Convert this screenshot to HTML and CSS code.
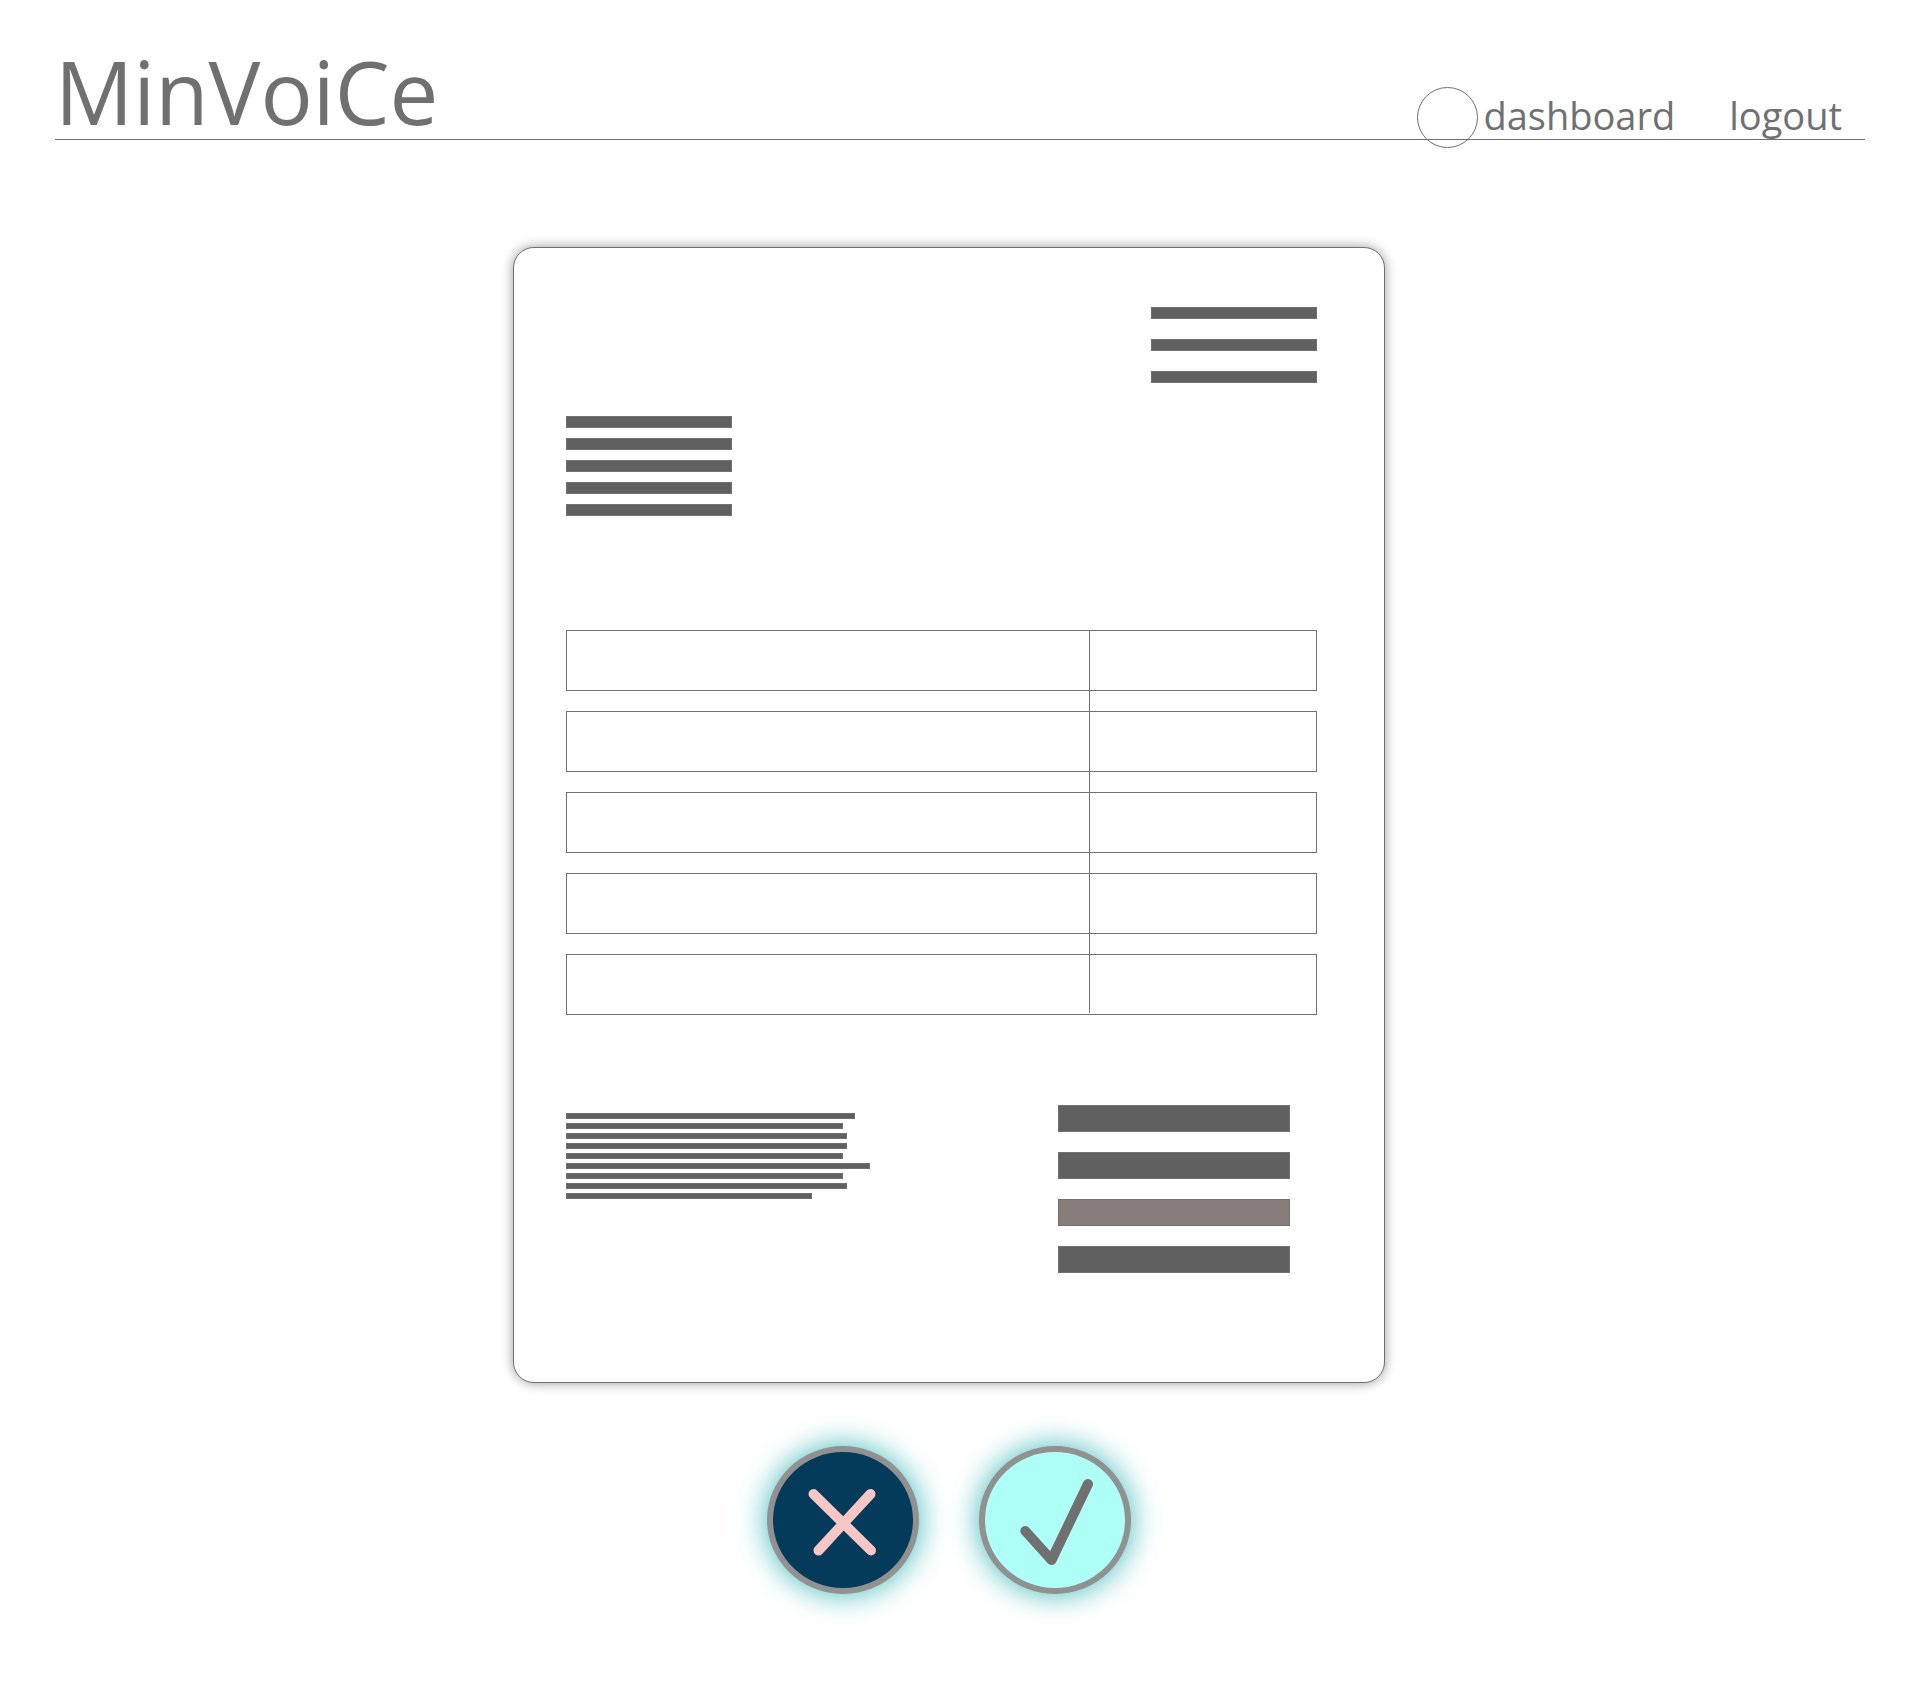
FILE: index.html
```html
<!DOCTYPE html>
<html lang="en">
<head>
  <meta charset="utf-8">
  <meta name="viewport" content="width=device-width, initial-scale=1">
  <title>MinVoiCe</title>
  <link rel="stylesheet" href="styles.css">
</head>
<body>
  <header class="site-header">
    <h1 class="brand">MinVoiCe</h1>
    <nav class="site-nav">
      <a class="nav-link nav-link-current" href="#dashboard">dashboard</a>
      <a class="nav-link" href="#logout">logout</a>
    </nav>
  </header>

  <main class="preview">
    <article class="invoice">
      <div class="sender">
        <div class="bar"></div>
        <div class="bar"></div>
        <div class="bar"></div>
      </div>
      <div class="recipient">
        <div class="bar"></div>
        <div class="bar"></div>
        <div class="bar"></div>
        <div class="bar"></div>
        <div class="bar"></div>
      </div>
      <div class="items">
        <table class="items-table">
          <tbody>
            <tr><td class="item-name"></td><td class="item-price"></td></tr>
            <tr><td class="item-name"></td><td class="item-price"></td></tr>
            <tr><td class="item-name"></td><td class="item-price"></td></tr>
            <tr><td class="item-name"></td><td class="item-price"></td></tr>
            <tr><td class="item-name"></td><td class="item-price"></td></tr>
          </tbody>
        </table>
      </div>
      <div class="summary">
        <div class="notes">
          <div class="bar" style="width: 289px"></div>
          <div class="bar" style="width: 277px"></div>
          <div class="bar" style="width: 281px"></div>
          <div class="bar" style="width: 281px"></div>
          <div class="bar" style="width: 277px"></div>
          <div class="bar" style="width: 304px"></div>
          <div class="bar" style="width: 277px"></div>
          <div class="bar" style="width: 281px"></div>
          <div class="bar" style="width: 246px"></div>
        </div>
        <div class="totals">
          <div class="bar"></div>
          <div class="bar"></div>
          <div class="bar bar-light"></div>
          <div class="bar"></div>
        </div>
      </div>
    </article>

    <div class="actions">
      <button class="action action-reject" type="button" aria-label="Reject">
        <svg class="action-icon" viewBox="6 6 140 136" aria-hidden="true">
          <path d="M46.5 48 104 104.5M103.5 48 51.5 104.5"/>
        </svg>
      </button>
      <button class="action action-accept" type="button" aria-label="Accept">
        <svg class="action-icon" viewBox="6 6 140 136" aria-hidden="true">
          <path d="M46.3 85 72.5 114 109 38"/>
        </svg>
      </button>
    </div>
  </main>
</body>
</html>
```

FILE: styles.css
```css
*,
*::before,
*::after {
  box-sizing: border-box;
}

body {
  margin: 0;
  background: #fff;
  color: #707070;
  font-family: "Open Sans", "Noto Sans", sans-serif;
}

.site-header {
  display: flex;
  justify-content: space-between;
  align-items: flex-end;
  margin: 0 55px;
  padding: 43px 23px 0 0;
  border-bottom: 1px solid #707070;
}

.brand {
  margin: 0;
  font-size: 87px;
  font-weight: 400;
  line-height: 96px;
}

.site-nav {
  display: flex;
  gap: 54px;
}

.nav-link {
  position: relative;
  color: inherit;
  font-size: 38px;
  line-height: 48px;
  text-decoration: none;
}

/* Ring marker that hangs over the header rule */
.nav-link-current::before {
  content: "";
  position: absolute;
  top: -4px;
  left: -66px;
  width: 61px;
  height: 61px;
  border: 1px solid #707070;
  border-radius: 50%;
}

.preview {
  display: flex;
  flex-direction: column;
  align-items: center;
  gap: 63px;
  padding: 107px 22px 92px 0;
}

.invoice {
  width: 872px;
  max-width: 100%;
  padding: 59px 67px 109px 52px;
  border: 1px solid #707070;
  border-radius: 21px;
  background: #fff;
  box-shadow: 0 0 12px rgba(0, 0, 0, 0.4);
}

.bar {
  border: 1px solid #707070;
  background: #606060;
}

.bar-light {
  background: #877d7a;
}

.sender,
.recipient,
.notes,
.totals {
  display: flex;
  flex-direction: column;
}

.sender {
  align-items: flex-end;
  gap: 20px;
}

.recipient {
  gap: 10px;
  margin-top: 33px;
}

.sender .bar,
.recipient .bar {
  width: 166px;
  height: 12px;
}

.items {
  position: relative;
  margin: 94px 0 70px;
}

/* Column rule running through the rows and the gaps between them */
.items::after {
  content: "";
  position: absolute;
  top: 20px;
  right: 227px;
  bottom: 22px;
  width: 1px;
  background: #707070;
}

.items-table {
  width: 100%;
  table-layout: fixed;
  border-spacing: 0 20px;
}

.item-name,
.item-price {
  height: 61px;
  padding: 0;
  border: 1px solid #707070;
}

.item-name {
  border-right: 0;
}

.item-price {
  width: 227px;
  border-left: 0;
}

.summary {
  display: flex;
  justify-content: space-between;
  align-items: flex-start;
  padding-right: 27px;
}

.notes {
  gap: 4px;
  padding-top: 8px;
}

.notes .bar {
  height: 6px;
}

.totals {
  gap: 20px;
}

.totals .bar {
  width: 232px;
  height: 27px;
}

.actions {
  display: flex;
  gap: 60px;
}

.action {
  width: 152px;
  height: 148px;
  padding: 0;
  border: 6px solid #919191;
  border-radius: 50%;
  box-shadow: 0 0 30px #3dbab8;
  cursor: pointer;
}

.action-reject {
  background: #043b5a;
  color: #f9c6c6;
}

.action-accept {
  background: #aefff6;
  color: #707070;
}

.action-icon {
  display: block;
  width: 100%;
  height: 100%;
  fill: none;
  stroke: currentColor;
  stroke-width: 10;
  stroke-linecap: round;
  stroke-linejoin: round;
}
```
